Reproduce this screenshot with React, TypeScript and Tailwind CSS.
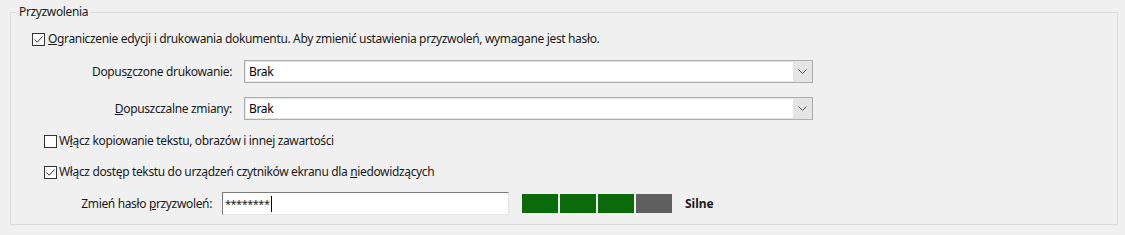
import React from "react";

function Check({ checked }: { checked: boolean }) {
  return (
    <span className="w-[13px] h-[13px] border border-[#333333] bg-white flex items-center justify-center shrink-0">
      {checked && (
        <svg width="11" height="11" viewBox="0 0 11 11">
          <path d="M1.5 5.5 L4.2 8.2 L9.5 2.5" fill="none" stroke="#333333" strokeWidth="1" />
        </svg>
      )}
    </span>
  );
}

function Select({ value }: { value: string }) {
  return (
    <div className="w-[569px] h-[23px] border border-[#adadad] bg-[#e5e5e5] flex">
      <div className="flex-1 bg-white ml-[1px] my-[1px] flex items-center pl-[3px] text-black">{value}</div>
      <div className="w-[19px] flex items-center justify-center">
        <svg width="9" height="6" viewBox="0 0 9 6">
          <path d="M0.5 0.5 L4.5 4.5 L8.5 0.5" fill="none" stroke="#555555" strokeWidth="1" />
        </svg>
      </div>
    </div>
  );
}

export default function App() {
  return (
    <div
      className="w-[1125px] h-[235px] bg-[#f0f0f0] text-[12px] tracking-[-0.35px] text-[#1a1a1a] pt-[5px] pl-[10px] pr-[7px]"
      style={{ fontFamily: '"Noto Sans", "Segoe UI", sans-serif' }}
    >
      <div className="relative border border-[#dcdcdc] mt-[7px] h-[213px] pl-[21px]">
        <span className="absolute left-[6px] -top-[9px] bg-[#f0f0f0] px-[2px] leading-[16px]">Przyzwolenia</span>
        <div className="flex items-center gap-[3px] mt-[19px] h-[14px]">
          <Check checked />
          <span>
            <u>O</u>graniczenie edycji i drukowania dokumentu. Aby zmienić ustawienia przyzwoleń, wymagane jest hasło.
          </span>
        </div>
        <div className="flex items-center mt-[14px]">
          <span className="w-[212px] text-right pr-[12px]">
            Dopus<u>z</u>czone drukowanie:
          </span>
          <Select value="Brak" />
        </div>
        <div className="flex items-center mt-[14px]">
          <span className="w-[212px] text-right pr-[12px]">
            <u>D</u>opuszczalne zmiany:
          </span>
          <Select value="Brak" />
        </div>
        <div className="flex items-center gap-[2px] mt-[14px] pl-[12px] h-[14px]">
          <Check checked={false} />
          <span>
            W<u>ł</u>ącz kopiowanie tekstu, obrazów i innej zawartości
          </span>
        </div>
        <div className="flex items-center gap-[2px] mt-[17px] pl-[12px] h-[14px]">
          <Check checked />
          <span>
            Włącz dostęp tekstu do urządzeń czytników ekranu dla <u>n</u>iedowidzących
          </span>
        </div>
        <div className="flex items-center mt-[13px]">
          <span className="w-[190px] text-right pr-[10px]">
            Zmień hasło <u>p</u>rzyzwoleń:
          </span>
          <div className="w-[287px] h-[23px] border border-[#7a7a7a] border-r-[#e3e3e3] border-b-[#e3e3e3] bg-white flex items-center pl-[2px] text-[11px] leading-none tracking-[-0.5px]">
            <span>********</span>
            <span className="w-[1px] h-[16px] bg-black ml-[1px]" />
          </div>
          <div className="flex gap-[2px] ml-[13px]">
            <div className="w-[36px] h-[19px] bg-[#0b6b0b]" />
            <div className="w-[36px] h-[19px] bg-[#0b6b0b]" />
            <div className="w-[36px] h-[19px] bg-[#0b6b0b]" />
            <div className="w-[36px] h-[19px] bg-[#5f5f5f]" />
          </div>
          <span className="ml-[13px] font-bold tracking-normal">Silne</span>
        </div>
      </div>
    </div>
  );
}
